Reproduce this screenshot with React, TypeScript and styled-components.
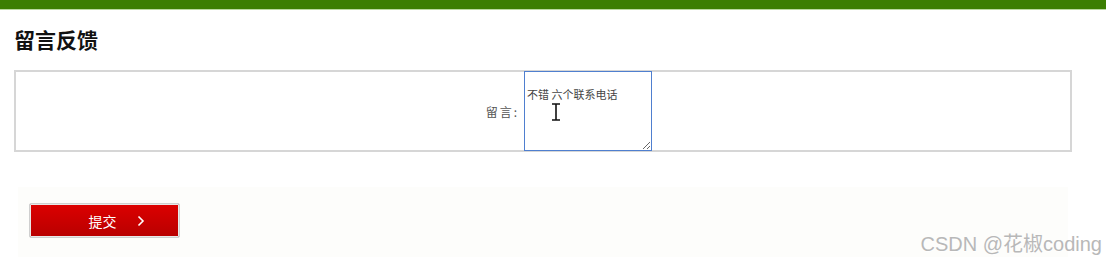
import React, { useState } from 'react';
import styled, { createGlobalStyle } from 'styled-components';

const GlobalStyle = createGlobalStyle`
  html, body {
    margin: 0;
    padding: 0;
    background: #ffffff;
    font-family: "Liberation Sans", "Noto Sans CJK SC", sans-serif;
  }
`;

const Page = styled.div`
  position: relative;
  width: 1106px;
  height: 264px;
  overflow: hidden;
`;

const TopBar = styled.div`
  height: 9px;
  background: #3b7e02;
  border-bottom: 1px solid #b9d8a0;
`;

const Content = styled.div`
  padding: 0 34px 0 14px;
`;

const Title = styled.h2`
  margin: 0;
  padding-top: 14px;
  height: 46px;
  font-size: 21px;
  line-height: 30px;
  font-weight: bold;
  color: #111;
  font-family: "Noto Sans CJK SC", sans-serif;
`;

const FormBox = styled.div`
  display: grid;
  grid-template-columns: 508px 128px 1fr;
  align-items: center;
  height: 78px;
  border: 2px solid #d6d6d6;
  box-sizing: content-box;
`;

const Label = styled.label`
  justify-self: end;
  padding-right: 5px;
  font-size: 12px;
  color: #555;
  letter-spacing: 2px;
  font-family: "Noto Sans CJK SC", sans-serif;
`;

const AreaWrap = styled.div`
  position: relative;
  height: 80px;
  margin-top: -1px;
`;

const Area = styled.textarea`
  display: block;
  width: 128px;
  height: 80px;
  box-sizing: border-box;
  padding: 14px 2px 2px;
  border: 1px solid #4f7fcf;
  border-radius: 0;
  outline: none;
  font-size: 11px;
  line-height: 16px;
  color: #444;
  font-family: "Noto Sans CJK SC", sans-serif;
  resize: both;
`;

const Cursor = styled.svg`
  position: absolute;
  left: 27px;
  top: 32px;
  pointer-events: none;
`;

const Footer = styled.div`
  margin: 35px 4px 0 4px;
  height: 70px;
  background: #fdfdfb;
  padding: 16px 0 0 11px;
  box-sizing: border-box;
`;

const SubmitButton = styled.button`
  display: flex;
  align-items: center;
  justify-content: center;
  gap: 20px;
  width: 151px;
  height: 35px;
  padding: 0 0 0 24px;
  border: 1px solid #cfcfcf;
  border-radius: 2px;
  background: linear-gradient(#dc0000, #b80000);
  box-shadow: inset 0 0 0 1px #e8e8e8;
  color: #fff;
  font-size: 14px;
  font-family: "Noto Sans CJK SC", sans-serif;
  cursor: pointer;
`;

const Watermark = styled.div`
  position: absolute;
  right: 4px;
  bottom: 7px;
  font-size: 20px;
  color: #b8b8b8;
  font-family: "Liberation Sans", "Noto Sans CJK SC", sans-serif;
  text-shadow: 0 1px 0 #fff;
`;

export default function App() {
  const [msg, setMsg] = useState('不错 六个联系电话');

  return (
    <Page>
      <GlobalStyle />
      <TopBar />
      <Content>
        <Title>留言反馈</Title>
        <FormBox>
          <Label htmlFor="msg">留言:</Label>
          <AreaWrap>
            <Area id="msg" value={msg} onChange={(e) => setMsg(e.target.value)} />
            <Cursor width="10" height="18" viewBox="0 0 10 18">
              <path d="M1 1h8M5 1v16M1 17h8" stroke="#111" strokeWidth="1.6" fill="none" />
            </Cursor>
          </AreaWrap>
          <div />
        </FormBox>
        <Footer>
          <SubmitButton type="button">
            <span>提交</span>
            <svg width="8" height="12" viewBox="0 0 8 12">
              <path d="M1.5 1.5L6 6l-4.5 4.5" stroke="#fff" strokeWidth="1.6" fill="none" />
            </svg>
          </SubmitButton>
        </Footer>
      </Content>
      <Watermark>CSDN @花椒coding</Watermark>
    </Page>
  );
}
